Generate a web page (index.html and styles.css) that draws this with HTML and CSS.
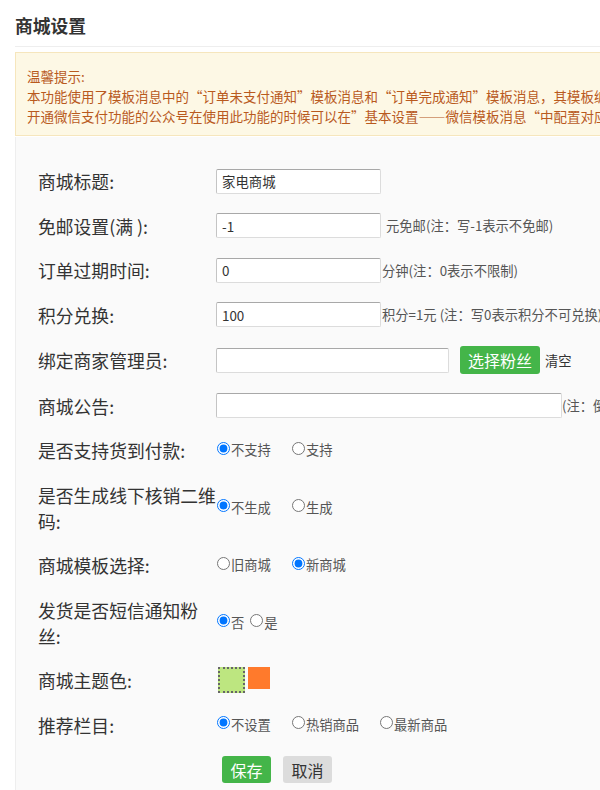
FILE: index.html
```html
<!DOCTYPE html>
<html lang="zh-CN">
<head>
<meta charset="utf-8">
<title>商城设置</title>
<link rel="stylesheet" href="styles.css">
</head>
<body>
<div class="page">
  <h2 class="title">商城设置</h2>
  <div class="notice">
    <p>温馨提示:</p>
    <p>本功能使用了模板消息中的“订单未支付通知”模板消息和“订单完成通知”模板消息，其模板编号分别为OPENTM200444326和OPENTM202521011，请在微信公众平台中添加。</p>
    <p>开通微信支付功能的公众号在使用此功能的时候可以在”基本设置——微信模板消息“中配置对应的模板ID。</p>
  </div>
  <div class="panel">
    <div class="row">
      <label class="lbl">商城标题:</label>
      <div class="ctl"><input class="txt w165" type="text" value="家电商城"></div>
    </div>
    <div class="row">
      <label class="lbl">免邮设置(满 ):</label>
      <div class="ctl"><input class="txt w165" type="text" value="-1"><span class="note gap5">元免邮(注：写-1表示不免邮)</span></div>
    </div>
    <div class="row">
      <label class="lbl">订单过期时间:</label>
      <div class="ctl"><input class="txt w165" type="text" value="0"><span class="note gap1">分钟(注：0表示不限制)</span></div>
    </div>
    <div class="row">
      <label class="lbl">积分兑换:</label>
      <div class="ctl"><input class="txt w165" type="text" value="100"><span class="note gap1">积分=1元 (注：写0表示积分不可兑换)</span></div>
    </div>
    <div class="row">
      <label class="lbl">绑定商家管理员:</label>
      <div class="ctl"><input class="txt w233" type="text" value=""><button class="btn btn-pick" type="button">选择粉丝</button><span class="clear">清空</span></div>
    </div>
    <div class="row">
      <label class="lbl">商城公告:</label>
      <div class="ctl"><input class="txt w345" type="text" value=""><span class="note">(注：倒计时公告显示在商城首页)</span></div>
    </div>
    <div class="row">
      <label class="lbl">是否支持货到付款:</label>
      <div class="ctl">
        <label class="opt"><input type="radio" name="cod" checked>不支持</label>
        <label class="opt"><input type="radio" name="cod">支持</label>
      </div>
    </div>
    <div class="row">
      <label class="lbl">是否生成线下核销二维码:</label>
      <div class="ctl">
        <label class="opt"><input type="radio" name="qr" checked>不生成</label>
        <label class="opt"><input type="radio" name="qr">生成</label>
      </div>
    </div>
    <div class="row">
      <label class="lbl">商城模板选择:</label>
      <div class="ctl">
        <label class="opt"><input type="radio" name="tpl">旧商城</label>
        <label class="opt"><input type="radio" name="tpl" checked>新商城</label>
      </div>
    </div>
    <div class="row">
      <label class="lbl">发货是否短信通知粉丝:</label>
      <div class="ctl">
        <label class="opt tight"><input type="radio" name="sms" checked>否</label>
        <label class="opt tight"><input type="radio" name="sms">是</label>
      </div>
    </div>
    <div class="row">
      <label class="lbl">商城主题色:</label>
      <div class="ctl swatches">
        <span class="sw sw-green"></span>
        <span class="sw sw-orange"></span>
      </div>
    </div>
    <div class="row">
      <label class="lbl">推荐栏目:</label>
      <div class="ctl">
        <label class="opt"><input type="radio" name="rec" checked>不设置</label>
        <label class="opt"><input type="radio" name="rec">热销商品</label>
        <label class="opt"><input type="radio" name="rec">最新商品</label>
      </div>
    </div>
    <div class="row">
      <span class="lbl"></span>
      <div class="ctl actions">
        <button class="btn btn-save" type="button">保存</button>
        <button class="btn btn-cancel" type="button">取消</button>
      </div>
    </div>
  </div>
</div>
</body>
</html>
```
FILE: styles.css
```css
html, body {
  margin: 0;
  padding: 0;
  overflow: hidden;
  background: #ffffff;
}
body {
  font-family: "Noto Sans CJK SC", "Noto Sans", sans-serif;
  color: #333333;
}
.page {
  width: 1000px;
  padding-left: 15px;
}
.title {
  margin: 0;
  padding: 12px 0 8px;
  font-size: 17.8px;
  line-height: 26px;
  font-weight: bold;
  color: #333333;
  border-bottom: 1px solid #eeeeee;
}
.notice {
  margin-top: 5px;
  border: 1px solid #f6e6bd;
  background: #fdf8e5;
  padding: 13px 12px 9px 11px;
  color: #b95a1e;
  font-size: 13.5px;
  line-height: 20px;
  white-space: nowrap;
}
.notice p {
  margin: 0;
}
.panel {
  margin-top: 1px;
  border-left: 1px solid #eeeeee;
  background: #fafafa;
  padding: 22px 0 60px 22px;
}
.row {
  display: flex;
  align-items: center;
  padding: 9px 0 9.5px;
}
.lbl {
  width: 178px;
  flex: none;
  font-size: 17.8px;
  line-height: 26px;
  color: #333333;
}
.ctl {
  display: flex;
  align-items: center;
}
.txt {
  box-sizing: border-box;
  height: 25px;
  margin: 0;
  padding: 0 5px;
  border: 1px solid #dcdcdc;
  border-top-color: #a8a8a8;
  border-left-color: #c4c4c4;
  border-radius: 2px;
  background: #ffffff;
  font-family: "Noto Sans CJK SC", "Noto Sans", sans-serif;
  font-size: 13.4px;
  color: #333333;
  outline: none;
}
.w165 { width: 165px; }
.w233 { width: 233px; }
.w345 { width: 346px; }
.note {
  font-size: 13.3px;
  color: #555555;
  white-space: nowrap;
}
.gap5 { margin-left: 5px; }
.gap1 { margin-left: 1px; }
.btn {
  box-sizing: border-box;
  border: none;
  border-radius: 3px;
  font-family: "Noto Sans CJK SC", "Noto Sans", sans-serif;
  font-size: 16px;
  line-height: 20px;
  cursor: pointer;
}
.btn-pick {
  margin-left: 11px;
  width: 80px;
  height: 28px;
  padding: 0;
  background: #44b549;
  color: #ffffff;
}
.clear {
  margin-left: 5px;
  font-size: 13.3px;
  color: #333333;
}
.opt {
  display: inline-flex;
  align-items: center;
  margin-right: 20px;
  font-size: 13.3px;
  line-height: 20px;
  color: #555555;
}
.opt.tight {
  margin-right: 5px;
}
.opt input {
  width: 13px;
  height: 13px;
  margin: 0 1px 4px 1px;
}
.swatches {
  align-items: flex-start;
  margin-left: 2px;
}
.sw {
  display: block;
}
.sw-green {
  box-sizing: border-box;
  width: 27px;
  height: 26px;
  border: 2px dotted #666666;
  background: #bde680;
}
.sw-orange {
  margin-left: 3px;
  width: 22px;
  height: 22px;
  background: #ff7a2c;
}
.actions {
  margin-left: 6px;
}
.btn-save {
  width: 49px;
  height: 27px;
  padding: 0;
  background: #44b549;
  color: #ffffff;
}
.btn-cancel {
  margin-left: 12px;
  width: 49px;
  height: 27px;
  padding: 0;
  background: #dcdcdc;
  color: #333333;
}
```
